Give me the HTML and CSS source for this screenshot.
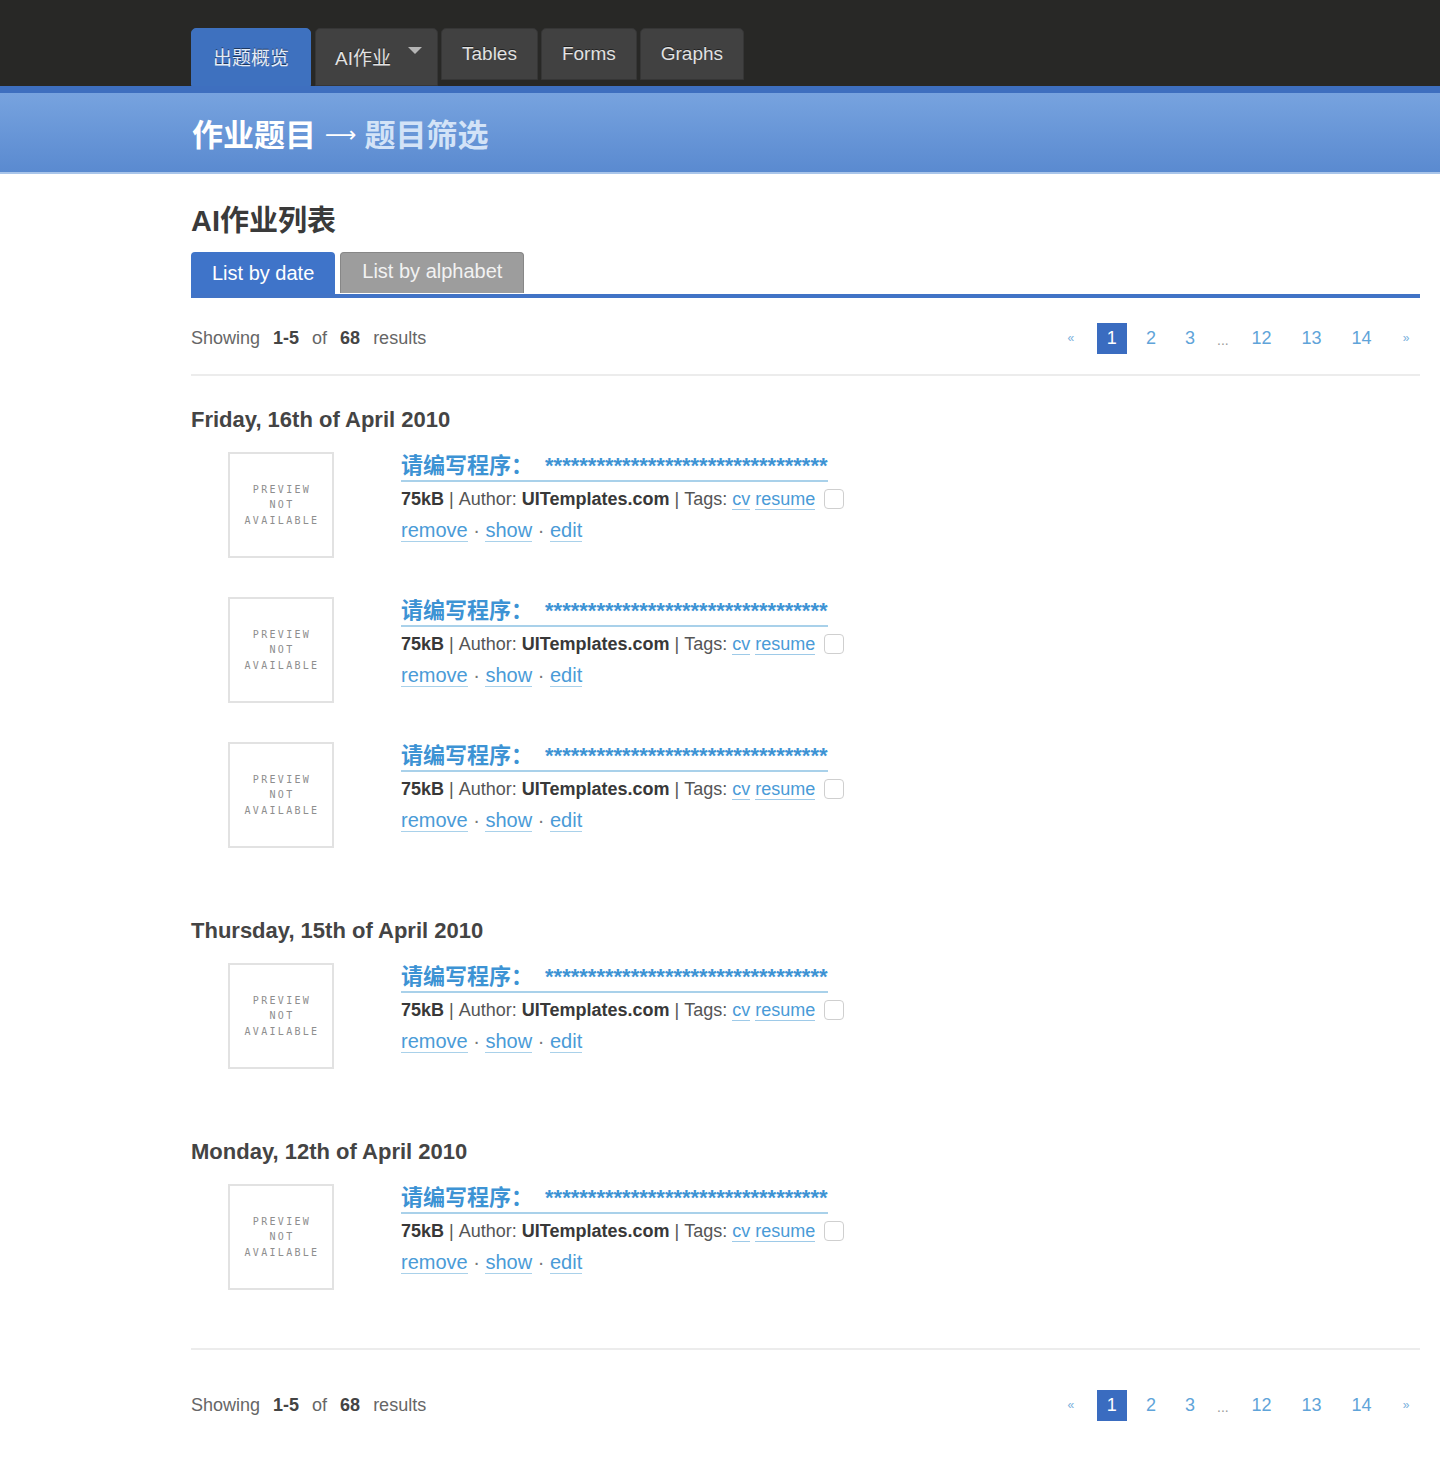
FILE: index.html
```html
<!DOCTYPE html>
<html lang="zh">
<head>
<meta charset="utf-8">
<title>AI作业列表</title>
<link rel="stylesheet" href="styles.css">
</head>
<body>
<div class="topbar">
  <a class="navtab active">出题概览</a>
  <a class="navtab drop">AI作业<span class="caret"></span></a>
  <a class="navtab">Tables</a>
  <a class="navtab">Forms</a>
  <a class="navtab">Graphs</a>
</div>
<div class="crumbbar">
  <div class="crumb"><span class="c1">作业题目</span><span class="arrow">⟶</span><span class="c2">题目筛选</span></div>
</div>
<div class="wrap">
  <h1 class="pagetitle">AI作业列表</h1>
  <div class="viewtabs">
    <a class="vtab on">List by date</a>
    <a class="vtab off">List by alphabet</a>
  </div>
  <div class="pager top">
    <div class="showing">Showing <b>1-5</b> of <b>68</b> results</div>
    <div class="pages">
      <a class="pg arrowpg">«</a><a class="pg cur">1</a><a class="pg">2</a><a class="pg">3</a><span class="dots">...</span><a class="pg two">12</a><a class="pg two">13</a><a class="pg two">14</a><a class="pg arrowpg">»</a>
    </div>
  </div>
  <hr class="rule first">

  <div class="group first">
    <h3 class="date">Friday, 16th of April 2010</h3>
    <div class="item">
      <div class="thumb"><span>PREVIEW<br>NOT<br>AVAILABLE</span></div>
      <div class="info">
        <a class="title">请编写程序：<span class="stars">*********************************</span></a>
        <div class="meta"><b>75kB</b>&nbsp;|&nbsp;Author:&nbsp;<b>UITemplates.com</b>&nbsp;|&nbsp;Tags:&nbsp;<a class="tag">cv</a>&nbsp;<a class="tag">resume</a><input type="checkbox" class="chk"></div>
        <div class="actions"><a>remove</a> · <a>show</a> · <a>edit</a></div>
      </div>
    </div>
    <div class="item">
      <div class="thumb"><span>PREVIEW<br>NOT<br>AVAILABLE</span></div>
      <div class="info">
        <a class="title">请编写程序：<span class="stars">*********************************</span></a>
        <div class="meta"><b>75kB</b>&nbsp;|&nbsp;Author:&nbsp;<b>UITemplates.com</b>&nbsp;|&nbsp;Tags:&nbsp;<a class="tag">cv</a>&nbsp;<a class="tag">resume</a><input type="checkbox" class="chk"></div>
        <div class="actions"><a>remove</a> · <a>show</a> · <a>edit</a></div>
      </div>
    </div>
    <div class="item">
      <div class="thumb"><span>PREVIEW<br>NOT<br>AVAILABLE</span></div>
      <div class="info">
        <a class="title">请编写程序：<span class="stars">*********************************</span></a>
        <div class="meta"><b>75kB</b>&nbsp;|&nbsp;Author:&nbsp;<b>UITemplates.com</b>&nbsp;|&nbsp;Tags:&nbsp;<a class="tag">cv</a>&nbsp;<a class="tag">resume</a><input type="checkbox" class="chk"></div>
        <div class="actions"><a>remove</a> · <a>show</a> · <a>edit</a></div>
      </div>
    </div>
  </div>

  <div class="group">
    <h3 class="date">Thursday, 15th of April 2010</h3>
    <div class="item">
      <div class="thumb"><span>PREVIEW<br>NOT<br>AVAILABLE</span></div>
      <div class="info">
        <a class="title">请编写程序：<span class="stars">*********************************</span></a>
        <div class="meta"><b>75kB</b>&nbsp;|&nbsp;Author:&nbsp;<b>UITemplates.com</b>&nbsp;|&nbsp;Tags:&nbsp;<a class="tag">cv</a>&nbsp;<a class="tag">resume</a><input type="checkbox" class="chk"></div>
        <div class="actions"><a>remove</a> · <a>show</a> · <a>edit</a></div>
      </div>
    </div>
  </div>

  <div class="group">
    <h3 class="date">Monday, 12th of April 2010</h3>
    <div class="item">
      <div class="thumb"><span>PREVIEW<br>NOT<br>AVAILABLE</span></div>
      <div class="info">
        <a class="title">请编写程序：<span class="stars">*********************************</span></a>
        <div class="meta"><b>75kB</b>&nbsp;|&nbsp;Author:&nbsp;<b>UITemplates.com</b>&nbsp;|&nbsp;Tags:&nbsp;<a class="tag">cv</a>&nbsp;<a class="tag">resume</a><input type="checkbox" class="chk"></div>
        <div class="actions"><a>remove</a> · <a>show</a> · <a>edit</a></div>
      </div>
    </div>
  </div>

  <hr class="rule last">
  <div class="pager bottom">
    <div class="showing">Showing <b>1-5</b> of <b>68</b> results</div>
    <div class="pages">
      <a class="pg arrowpg">«</a><a class="pg cur">1</a><a class="pg">2</a><a class="pg">3</a><span class="dots">...</span><a class="pg two">12</a><a class="pg two">13</a><a class="pg two">14</a><a class="pg arrowpg">»</a>
    </div>
  </div>
</div>
</body>
</html>
```

FILE: styles.css
```css
* { box-sizing: border-box; }
body {
  margin: 0;
  background: #fff;
  font-family: "Liberation Sans", Arial, "Noto Sans CJK SC", sans-serif;
  color: #555;
}
a { cursor: pointer; }

/* top nav */
.topbar {
  height: 86px;
  background: #282826;
  display: flex;
  align-items: flex-start;
  padding: 28px 0 0 191px;
  gap: 3px;
}
.navtab {
  display: flex;
  align-items: center;
  height: 52px;
  padding: 0 20px 0;
  background: #414141;
  border: 1px solid #363636;
  border-radius: 5px 5px 0 0;
  color: #e2e2e2;
  font-size: 19px;
  text-shadow: 0 -1px 0 rgba(0,0,0,0.5);
}
.navtab.active {
  height: 58px;
  width: 120px;
  padding: 0 0 2px 21px;
  background: #3e71bf;
  border-color: #3e71bf;
  color: #e4ecf8;
  margin-right: 1px;
}
.navtab.drop {
  height: 58px;
  width: 123px;
  padding: 0 0 2px 19px;
}
.caret {
  display: inline-block;
  width: 0;
  height: 0;
  border-left: 7px solid transparent;
  border-right: 7px solid transparent;
  border-top: 7px solid #b5b5b5;
  margin: 0 0 12px 17px;
}

/* breadcrumb band */
.crumbbar {
  border-top: 7px solid #3e6fbf;
  background: linear-gradient(#77a3df, #5a8ad0);
  height: 88px;
  border-bottom: 2px solid #a9c5ea;
  padding-left: 192px;
}
.crumb {
  display: flex;
  align-items: center;
  height: 79px;
  font-size: 31px;
  font-weight: bold;
}
.c1 { color: #fff; }
.arrow {
  color: #fff;
  font-weight: normal;
  font-family: "DejaVu Sans", sans-serif;
  font-size: 22px;
  margin: 3px 8px 0 9px;
}
.c2 { color: #d3e3f7; }

/* main */
.wrap {
  margin-left: 191px;
  width: 1229px;
  padding-bottom: 56px;
}
.pagetitle {
  margin: 30px 0 14px;
  font-size: 29px;
  line-height: 34px;
  font-weight: bold;
  color: #3a3a3a;
}
.viewtabs {
  display: flex;
  align-items: flex-start;
  gap: 5px;
  border-bottom: 4px solid #4173c6;
}
.vtab {
  display: flex;
  align-items: center;
  font-size: 20px;
  padding: 0 21px;
  border-radius: 4px 4px 0 0;
}
.vtab.on {
  height: 42px;
  background: #3f74c9;
  color: #fff;
}
.vtab.off {
  height: 41px;
  background: #9d9d9d;
  border: 1px solid #878787;
  border-bottom: none;
  color: #f2f2f2;
  padding-bottom: 3px;
}

.pager {
  display: flex;
  justify-content: space-between;
  align-items: center;
  height: 31px;
}
.pager.top { margin-top: 25px; }
.pager.bottom { margin-top: 40px; }
.showing {
  font-size: 18px;
  color: #666;
  word-spacing: 8px;
}
.showing b { color: #444; }
.pages {
  display: flex;
  align-items: center;
  gap: 9px;
  margin-right: -1px;
}
.pg {
  display: inline-block;
  height: 31px;
  line-height: 31px;
  padding: 0 10px;
  font-size: 18px;
  color: #5fa4d9;
  text-align: center;
}
.pg.two { padding: 0 10.5px; }
.pg.cur {
  background: #3a6cc0;
  color: #fff;
  margin-left: 2px;
}
.pg.arrowpg {
  width: 30px;
  padding: 0;
  font-size: 12px;
  color: #7ab0dc;
}
.dots {
  width: 18px;
  text-align: center;
  font-size: 14px;
  color: #9a9a9a;
  line-height: 31px;
  padding-top: 4px;
}

.rule {
  border: none;
  height: 2px;
  background: #ececec;
  margin: 0;
}
.rule.first { margin-top: 20px; }
.rule.last { margin-top: 58px; }

.group.first { margin-top: 31px; }
.group + .group { margin-top: 70px; }
.date {
  margin: 0 0 19px;
  font-size: 22px;
  line-height: 26px;
  font-weight: bold;
  color: #444;
}

.item {
  display: flex;
  margin-left: 37px;
}
.item + .item { margin-top: 39px; }
.thumb {
  width: 106px;
  height: 106px;
  border: 2px solid #e2e2e2;
  display: flex;
  align-items: center;
  justify-content: center;
  text-align: center;
}
.thumb span {
  font-family: "DejaVu Sans Mono", monospace;
  font-size: 10px;
  letter-spacing: 2.3px;
  line-height: 15.5px;
  color: #8e8e8e;
  padding-left: 2px;
}
.info {
  margin-left: 67px;
  display: flex;
  flex-direction: column;
  align-items: flex-start;
}
.title {
  font-size: 22px;
  line-height: 28px;
  font-weight: bold;
  color: #3d93d4;
  border-bottom: 2px solid #a9d1ea;
  white-space: nowrap;
}
.stars { margin-left: 12px; }
.meta {
  margin-top: 5px;
  line-height: 24px;
  font-size: 18px;
  color: #555;
  display: flex;
  align-items: center;
  white-space: nowrap;
}
.meta b { color: #383838; }
.tag {
  color: #4a9bd7;
  border-bottom: 1px solid #9ecae8;
  line-height: 20px;
}
.chk {
  appearance: none;
  -webkit-appearance: none;
  width: 20px;
  height: 20px;
  margin: 0 0 0 9px;
  border: 1.5px solid #cfcfcf;
  border-radius: 4px;
  background: #fff;
}
.actions {
  margin-top: 7px;
  line-height: 24px;
  font-size: 20px;
  color: #777;
}
.actions a {
  color: #4a9bd7;
  border-bottom: 1px solid #a9d1ea;
}
```
